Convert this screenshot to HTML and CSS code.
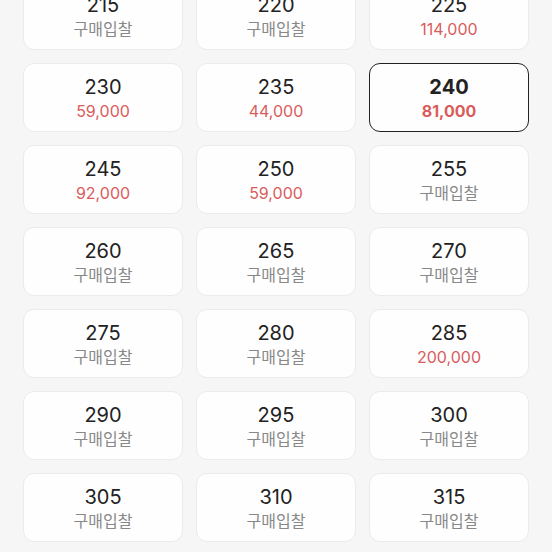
FILE: index.html
```html
<!DOCTYPE html>
<html lang="ko">
<head>
  <meta charset="UTF-8" />
  <meta name="viewport" content="width=device-width, initial-scale=1.0"/>
  <title>사이즈 선택</title>
  <link rel="stylesheet" href="styles.css">
</head>
<body>
  <div class="size-grid">
    <div class="size-card"><span class="size">215</span><span class="bid">구매입찰</span></div>
    <div class="size-card"><span class="size">220</span><span class="bid">구매입찰</span></div>
    <div class="size-card"><span class="size">225</span><span class="price">114,000</span></div>

    <div class="size-card"><span class="size">230</span><span class="price">59,000</span></div>
    <div class="size-card"><span class="size">235</span><span class="price">44,000</span></div>
    <div class="size-card selected"><span class="size">240</span><span class="price">81,000</span></div>

    <div class="size-card"><span class="size">245</span><span class="price">92,000</span></div>
    <div class="size-card"><span class="size">250</span><span class="price">59,000</span></div>
    <div class="size-card"><span class="size">255</span><span class="bid">구매입찰</span></div>

    <div class="size-card"><span class="size">260</span><span class="bid">구매입찰</span></div>
    <div class="size-card"><span class="size">265</span><span class="bid">구매입찰</span></div>
    <div class="size-card"><span class="size">270</span><span class="bid">구매입찰</span></div>

    <div class="size-card"><span class="size">275</span><span class="bid">구매입찰</span></div>
    <div class="size-card"><span class="size">280</span><span class="bid">구매입찰</span></div>
    <div class="size-card"><span class="size">285</span><span class="price">200,000</span></div>

    <div class="size-card"><span class="size">290</span><span class="bid">구매입찰</span></div>
    <div class="size-card"><span class="size">295</span><span class="bid">구매입찰</span></div>
    <div class="size-card"><span class="size">300</span><span class="bid">구매입찰</span></div>

    <div class="size-card"><span class="size">305</span><span class="bid">구매입찰</span></div>
    <div class="size-card"><span class="size">310</span><span class="bid">구매입찰</span></div>
    <div class="size-card"><span class="size">315</span><span class="bid">구매입찰</span></div>
  </div>
</body>
</html>
```

FILE: styles.css
```css
body {
  margin: 0;
  background-color: #f6f6f6;
  font-family: Inter, "Noto Sans CJK KR", sans-serif;
  overflow: hidden;
}

.size-grid {
  display: grid;
  grid-template-columns: repeat(3, 160px);
  grid-auto-rows: 69px;
  gap: 13px;
  padding: 0 23px;
  margin-top: -19px;
}

.size-card {
  display: flex;
  flex-direction: column;
  align-items: center;
  justify-content: center;
  gap: 1px;
  padding-top: 2px;
  background-color: #fefefe;
  border: 1px solid #ebebeb;
  border-radius: 11px;
  box-sizing: border-box;
}

.size-card.selected {
  border: 1.5px solid #222;
}

.size {
  font-size: 20px;
  line-height: 24px;
  color: #222;
}

.bid, .price {
  font-size: 16px;
  line-height: 22px;
}

.bid {
  color: #888;
}

.price {
  color: #d95c5c;
}

.selected .size,
.selected .price {
  font-weight: 700;
}
```
